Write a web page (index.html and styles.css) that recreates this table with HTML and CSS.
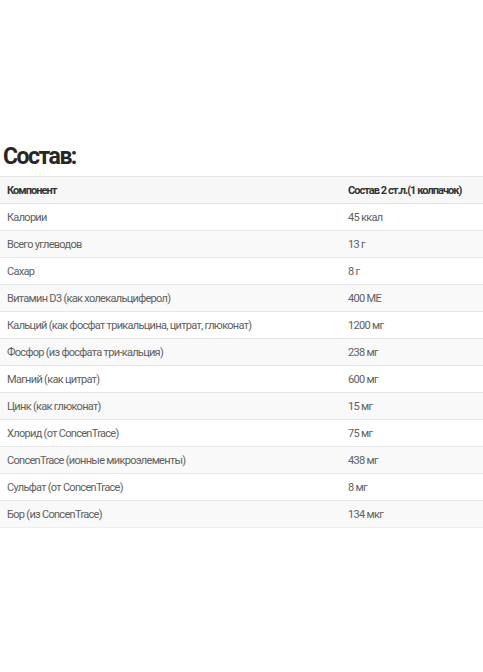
FILE: index.html
```html
<!DOCTYPE html>
<html lang="ru">
<head>
<meta charset="utf-8">
<link rel="stylesheet" href="styles.css">
</head>
<body>
<section class="composition">
  <h2 class="title">Состав:</h2>
  <table class="comp-table">
    <colgroup><col class="col1"><col class="col2"></colgroup>
    <thead>
      <tr><th>Компонент</th><th>Состав 2 ст.л.(1 колпачок)</th></tr>
    </thead>
    <tbody>
      <tr><td>Калории</td><td>45 ккал</td></tr>
      <tr><td>Всего углеводов</td><td>13 г</td></tr>
      <tr><td>Сахар</td><td>8 г</td></tr>
      <tr><td>Витамин D3 (как холекальциферол)</td><td>400 МЕ</td></tr>
      <tr><td>Кальций (как фосфат трикальцина, цитрат, глюконат)</td><td>1200 мг</td></tr>
      <tr><td>Фосфор (из фосфата три-кальция)</td><td>238 мг</td></tr>
      <tr><td>Магний (как цитрат)</td><td>600 мг</td></tr>
      <tr><td>Цинк (как глюконат)</td><td>15 мг</td></tr>
      <tr><td>Хлорид (от ConcenTrace)</td><td>75 мг</td></tr>
      <tr><td>ConcenTrace (ионные микроэлементы)</td><td>438 мг</td></tr>
      <tr><td>Сульфат (от ConcenTrace)</td><td>8 мг</td></tr>
      <tr><td>Бор (из ConcenTrace)</td><td>134 мкг</td></tr>
    </tbody>
  </table>
</section>
</body>
</html>
```
FILE: styles.css
```css
html, body {
  margin: 0;
  padding: 0;
  background: #fff;
}
body {
  font-family: Roboto, "Liberation Sans", sans-serif;
}
.composition {
  padding-top: 142px;
}
.title {
  margin: 0 0 4px 3px;
  font-size: 23px;
  font-weight: 700;
  color: #262626;
  line-height: 30px;
  letter-spacing: -1.5px;
}
.comp-table {
  width: 100%;
  table-layout: fixed;
  border-collapse: collapse;
  font-size: 11px;
  letter-spacing: -0.7px;
}
.col1 {
  width: 341px;
}
.comp-table th,
.comp-table td {
  height: 27px;
  padding: 0 7px;
  text-align: left;
  border-top: 1px solid #e6e6e6;
  box-sizing: border-box;
  white-space: nowrap;
}
.comp-table th {
  background: #f7f7f7;
  color: #333;
  font-weight: 700;
  letter-spacing: -0.95px;
}
.comp-table td {
  color: #606060;
  font-weight: 400;
}
.comp-table tbody tr:nth-child(even) td {
  background: #f9f9f9;
}
.comp-table tbody tr:last-child td {
  border-bottom: 1px solid #eee;
}
```
